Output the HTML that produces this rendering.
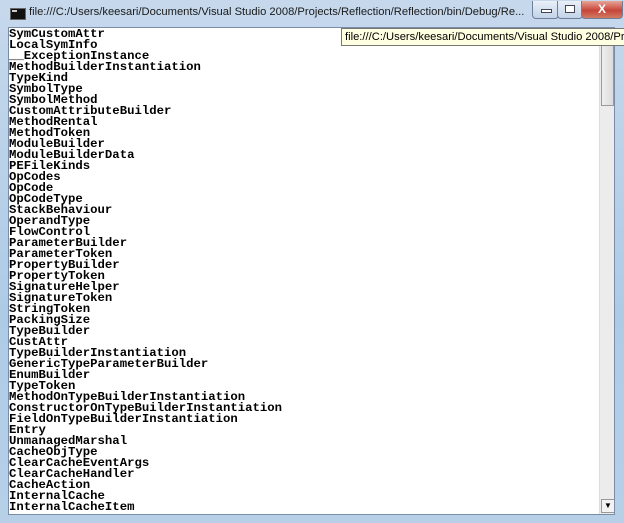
<!DOCTYPE html>
<html><head><meta charset="utf-8"><style>
html,body{margin:0;padding:0;width:624px;height:523px;overflow:hidden;background:#b9d1ea;}
.frame{position:absolute;left:0;top:0;width:624px;height:523px;background:linear-gradient(#c6d8ec,#aecbe6 60%,#b7d0e8);}
.title{position:absolute;left:29px;top:6px;font:11.2px "Liberation Sans",sans-serif;color:#1a1a1a;white-space:nowrap;}
.icon{position:absolute;left:10px;top:8px;width:14px;height:10px;background:#111;border:1px solid #666;}
.icon:after{content:"";position:absolute;left:1px;top:1px;width:5px;height:2px;background:#ccc;}
.btn{position:absolute;top:1px;height:17px;border:1px solid #6d7f99;border-top:none;border-radius:0 0 4px 4px;background:linear-gradient(#e9f0f8,#c2d3e8);}
.close{background:linear-gradient(#e8a596,#c6453a 55%,#d27a62);}
.client{position:absolute;left:8px;top:27px;width:607px;height:488px;background:#fff;border:1px solid #7b8da6;box-sizing:border-box;overflow:hidden;}
pre{margin:0;position:absolute;left:0px;top:1px;font:bold 12.3px/11px "Liberation Mono",monospace;color:#000;}
.sb{position:absolute;left:590px;top:0;width:16px;height:486px;background:#ececec;border-left:1px solid #ddd;}
.thumb{position:absolute;left:1px;top:2px;width:13px;height:76px;background:linear-gradient(90deg,#eee,#dcdcdc);border:1px solid #999;box-sizing:border-box;}
.arr{position:absolute;left:1px;bottom:1px;width:14px;height:14px;background:#f3f3f3;border:1px solid #999;box-sizing:border-box;font:8px sans-serif;text-align:center;line-height:12px;}
.tip{position:absolute;left:341px;top:28px;width:290px;height:18px;background:#ffffe1;border:1px solid #767676;box-sizing:border-box;font:11.2px/16px "Liberation Sans",sans-serif;padding-left:3px;white-space:nowrap;overflow:hidden;color:#000;}
</style></head><body>
<div class="frame"></div>
<div class="icon"></div>
<div class="title">file:///C:/Users/keesari/Documents/Visual Studio 2008/Projects/Reflection/Reflection/bin/Debug/Re...</div>
<div class="btn" style="left:532px;width:25px;"><div style="position:absolute;left:8px;top:8px;width:9px;height:2px;background:#fff;border:1px solid #445;"></div></div>
<div class="btn" style="left:557px;width:24px;"><div style="position:absolute;left:7px;top:4px;width:8px;height:6px;border:1px solid #445;background:#fff;"></div></div>
<div class="btn close" style="left:581px;width:40px;"><div style="position:absolute;left:0;width:40px;top:0;text-align:center;font:bold 12px/16px 'Liberation Sans',sans-serif;color:#fff;">X</div></div>
<div class="client">
<pre>SymCustomAttr
LocalSymInfo
__ExceptionInstance
MethodBuilderInstantiation
TypeKind
SymbolType
SymbolMethod
CustomAttributeBuilder
MethodRental
MethodToken
ModuleBuilder
ModuleBuilderData
PEFileKinds
OpCodes
OpCode
OpCodeType
StackBehaviour
OperandType
FlowControl
ParameterBuilder
ParameterToken
PropertyBuilder
PropertyToken
SignatureHelper
SignatureToken
StringToken
PackingSize
TypeBuilder
CustAttr
TypeBuilderInstantiation
GenericTypeParameterBuilder
EnumBuilder
TypeToken
MethodOnTypeBuilderInstantiation
ConstructorOnTypeBuilderInstantiation
FieldOnTypeBuilderInstantiation
Entry
UnmanagedMarshal
CacheObjType
ClearCacheEventArgs
ClearCacheHandler
CacheAction
InternalCache
InternalCacheItem</pre>
<div class="sb"><div class="thumb"></div><div class="arr">▼</div></div>
</div>
<div class="tip">file:///C:/Users/keesari/Documents/Visual Studio 2008/Projects</div>
</body></html>
